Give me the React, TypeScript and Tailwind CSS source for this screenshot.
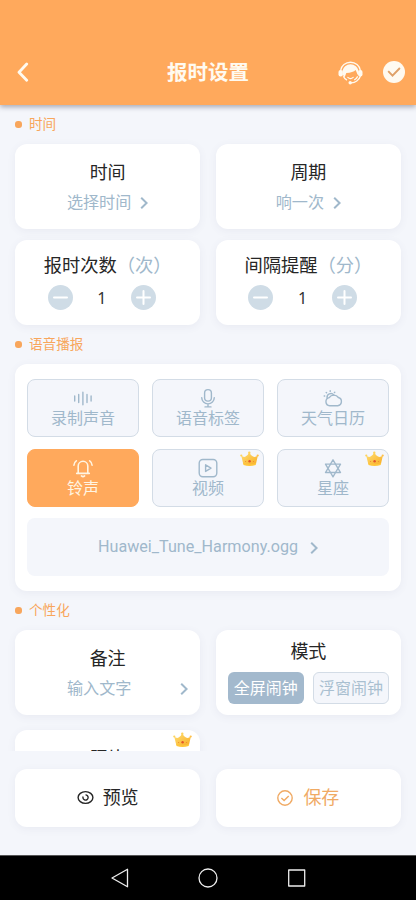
import type { ReactNode } from "react";

function Chevron({ className = "" }: { className?: string }) {
  return (
    <svg className={`shrink-0 ${className}`} width="8" height="12" viewBox="0 0 8 12" fill="none" stroke="#a0b8cb" strokeWidth="2">
      <path d="M1.2 0.7 6.6 6 1.2 11.3" />
    </svg>
  );
}

function Crown({ className = "" }: { className?: string }) {
  return (
    <svg className={`absolute ${className}`} width="19" height="16" viewBox="0 0 19 16">
      <defs>
        <linearGradient id="crown" x1="0" y1="0" x2="1" y2="1">
          <stop offset="0" stopColor="#ffdf73" />
          <stop offset="1" stopColor="#f8ac24" />
        </linearGradient>
      </defs>
      <path d="M1.2 4.6Q3.6 6.6 5.6 5.6 7.8 4.4 9.3 1.6 10.6 4.4 13 5.6 15.2 6.6 17.9 4.6L16 12.7Q9.5 15.6 3.2 12.7Z" fill="url(#crown)" />
      <path d="M3.1 12Q9.5 14.6 16.1 12L15.7 14Q9.5 16.2 3.5 14Z" fill="#ffc63a" />
      <circle cx="9.3" cy="1.7" r="1.2" fill="#ffd35b" />
      <circle cx="1.3" cy="4.5" r="1.1" fill="#ffd35b" />
      <circle cx="17.7" cy="4.5" r="1.1" fill="#ffc04a" />
      <circle cx="9.6" cy="10.2" r="1.2" fill="#e4572a" />
      <circle cx="5.6" cy="10.5" r=".6" fill="#ee8a2c" />
      <circle cx="13.5" cy="10.5" r=".6" fill="#ee8a2c" />
    </svg>
  );
}

function Label({ children, className = "" }: { children: ReactNode; className?: string }) {
  return (
    <div className={`flex h-5 items-center gap-[7px] text-[13.6px] leading-5 text-[#f8a65c] ${className}`}>
      <span className="h-[7px] w-[7px] rounded-[3px] bg-[#f8a65c]" />
      <span>{children}</span>
    </div>
  );
}

function Card({ children, className = "" }: { children?: ReactNode; className?: string }) {
  return (
    <div className={`relative rounded-xl bg-white shadow-[0_2px_8px_rgba(80,90,130,0.07)] ${className}`}>{children}</div>
  );
}

function PickCard({ title, value }: { title: string; value: string }) {
  return (
    <Card className="h-[85px] pt-[17px] text-center">
      <div className="text-[18px] leading-6 text-[#262626]">{title}</div>
      <div className="mt-[5px] flex items-center justify-center gap-[9px] text-[16.1px] leading-6 text-[#a0b8cb]">
        <span className="pt-px">{value}</span>
        <Chevron />
      </div>
    </Card>
  );
}

function RoundButton({ plus = false }: { plus?: boolean }) {
  return (
    <button className="flex h-[25px] w-[25px] items-center justify-center rounded-full bg-[#cfdce6]">
      <svg width="15" height="15" viewBox="0 0 15 15" stroke="#fff" strokeWidth="2" strokeLinecap="round">
        <path d="M1 7.5h13" />
        {plus && <path d="M7.5 1v13" />}
      </svg>
    </button>
  );
}

function StepCard({ title, unit }: { title: string; unit: string }) {
  return (
    <Card className="h-[85px] pt-[14px]">
      <div className="text-center text-[18.3px] leading-6 whitespace-nowrap text-[#262626]">
        {title}
        <span className="text-[#a0b8cb]">（{unit}）</span>
      </div>
      <div className="mt-[7px] flex items-center pl-[32.5px]">
        <RoundButton />
        <span className="w-[58.5px] text-center font-[Noto_Sans] text-[16px] leading-6 text-[#333]">1</span>
        <RoundButton plus />
      </div>
    </Card>
  );
}

const line = { fill: "none", stroke: "currentColor", strokeWidth: 1.4, strokeLinecap: "round", strokeLinejoin: "round" } as const;

const icons = {
  wave: (
    <svg width="20" height="20" viewBox="0 0 20 20" {...line}>
      <path d="M1.7 8v5M5.7 6.5v8M9.9 4.2v12.6M14 6.5v8M18.1 8v5" />
    </svg>
  ),
  mic: (
    <svg width="20" height="20" viewBox="0 0 20 20" {...line}>
      <rect x="6.6" y="1.6" width="6.8" height="11.5" rx="3.4" />
      <path d="M3.7 9.6a6.3 6.3 0 0 0 12.6 0M10 16v2.8M7 18.9h6" />
    </svg>
  ),
  weather: (
    <svg width="20" height="20" viewBox="0 0 20 20" {...line}>
      <path d="M6.7 17.7a4.1 4.1 0 0 1-.5-8.1 5.6 5.6 0 0 1 9.2-.1 4.2 4.2 0 0 1-.7 8.2z" />
      <path d="M4.1 10.1a3.8 3.8 0 0 1 6.8-2.9M7.2 2.8v.6M3.2 4.4l.4.4M1.2 8h.5M11.8 4.2l-.4.4" />
    </svg>
  ),
  bell: (
    <svg width="20" height="20" viewBox="0 0 20 20" {...line} strokeWidth={1.6}>
      <path d="M3.7 15.4h12.6M5.2 15.2V8.1a4.8 4.8 0 0 1 9.6 0v7.1M8.4 17.9q1.6 1.3 3.2 0M3.3 2.8Q1.1 4.3.9 7.2M16.7 2.8q2.2 1.5 2.4 4.4" />
    </svg>
  ),
  video: (
    <svg width="20" height="20" viewBox="0 0 20 20" {...line}>
      <rect x="1.2" y="1.5" width="17.6" height="17.2" rx="3.6" />
      <path d="m7.6 6.8 5.4 3.3-5.4 3.3z" />
    </svg>
  ),
  star: (
    <svg width="20" height="20" viewBox="0 0 20 20" {...line}>
      <path d="M10 1.8 12.5 6.1 17.5 6.1 15 10.3 17.5 14.5 12.5 14.5 10 18.8 7.5 14.5 2.5 14.5 5 10.3 2.5 6.1 7.5 6.1Z" />
      <path d="M7.5 6.1h5l2.5 4.2-2.5 4.2h-5L5 10.3Z" />
    </svg>
  ),
};

function Tile({ icon, name, active = false, vip = false }: { icon: ReactNode; name: string; active?: boolean; vip?: boolean }) {
  return (
    <button
      className={`relative flex h-[58px] flex-col items-center rounded-lg border pt-[8px] ${
        active ? "border-[#ffa95c] bg-[#ffa95c] text-[#fff5e2]" : "border-[#d3dce6] bg-[#f4f6fb] text-[#a0b8cb]"
      }`}
    >
      {icon}
      <span className="-mt-px text-[16px] leading-[24px]">{name}</span>
      {vip && <Crown className="top-[1px] right-[4px]" />}
    </button>
  );
}

export default function App() {
  return (
    <div className="flex h-[900px] w-[416px] flex-col overflow-hidden bg-[#f4f6fb] font-['Roboto','Noto_Sans_CJK_SC',sans-serif]">
      <header className="relative z-10 flex h-[105px] shrink-0 items-center bg-[#ffa95c] px-[11px] pt-[39px] text-[#fffaf0] shadow-[0_2px_5px_rgba(70,70,90,0.45)]">
        <div className="flex flex-1 items-center">
          <svg className="ml-[5px]" width="14" height="20" viewBox="0 0 14 20" fill="none" stroke="#fffaf0" strokeWidth="2.8" strokeLinecap="round" strokeLinejoin="round">
            <path d="M10.7 2 3 10.3l7.7 8" />
          </svg>
        </div>
        <h1 className="pt-[2px] text-[20.5px] leading-7 font-bold">报时设置</h1>
        <div className="flex flex-1 items-center justify-end gap-[20px]">
          <svg width="25" height="25" viewBox="0 0 25 25" fill="none">
            <path d="M2.6 10.5a10 9.6 0 0 1 19.8 0" stroke="#fffaf0" strokeWidth="1.3" />
            <path d="M4.4 11a8.2 7.9 0 0 1 16.2 0v4.6q-1.5-1.2-2-3.4l-1-2.3q-2.6 2.6-9.3 3l-1.6 4.4Q4.3 15 4.4 11Z" fill="#fffaf0" />
            <rect x=".5" y="10" width="4.4" height="6.6" rx="2" fill="#fffaf0" />
            <rect x="20.1" y="10" width="4.4" height="6.6" rx="2" fill="#fffaf0" />
            <path d="M22.4 16a9.5 9.5 0 0 1-9.6 6.8M5.3 16.3q1.2 2.6 3.7 3.8M16.2 20q2.3-1.2 3.5-3.6" stroke="#fffaf0" strokeWidth="1.3" />
            <path d="M9.8 17.4q2.7 2.3 5.4 0" stroke="#fffaf0" strokeWidth="1.2" strokeLinecap="round" />
            <circle cx="12.2" cy="22.8" r="1.7" fill="#fffaf0" />
          </svg>
          <svg width="22" height="22" viewBox="0 0 22 22" fill="none">
            <circle cx="11" cy="11" r="11" fill="#fffaf0" />
            <path d="m5.2 10.2 4.3 4.4 7.4-7.6" stroke="#dfa067" strokeWidth="1.9" />
          </svg>
        </div>
      </header>

      <main className="h-[646px] shrink-0 overflow-hidden px-[15px] pt-[9px]">
        <Label>时间</Label>
        <div className="mt-[10px] grid grid-cols-2 gap-x-[15.5px] gap-y-[11px]">
          <PickCard title="时间" value="选择时间" />
          <PickCard title="周期" value="响一次" />
          <StepCard title="报时次数" unit="次" />
          <StepCard title="间隔提醒" unit="分" />
        </div>

        <Label className="mt-[9px]">语音播报</Label>
        <Card className="mt-[10px] h-[227px] px-3 pt-[15px]">
          <div className="grid grid-cols-3 gap-x-[13px] gap-y-[12px]">
            <Tile icon={icons.wave} name="录制声音" />
            <Tile icon={icons.mic} name="语音标签" />
            <Tile icon={icons.weather} name="天气日历" />
            <Tile icon={icons.bell} name="铃声" active />
            <Tile icon={icons.video} name="视频" vip />
            <Tile icon={icons.star} name="星座" vip />
          </div>
          <div className="mt-[11px] flex h-[58px] items-center justify-center gap-[12px] rounded-lg bg-[#f4f6fb] pt-px text-[16.15px] text-[#a0b8cb]">
            <span>Huawei_Tune_Harmony.ogg</span>
            <Chevron />
          </div>
        </Card>

        <Label className="mt-[9px]">个性化</Label>
        <div className="mt-[10px] grid grid-cols-2 gap-x-[15.5px] gap-y-[15px]">
          <Card className="h-[85px] pt-[17px]">
            <div className="text-center text-[18px] leading-6 text-[#262626]">备注</div>
            <div className="mt-[5px] flex items-center justify-between pr-3 pl-[52px] text-[16.1px] leading-6 text-[#a0b8cb]">
              <span className="pt-px">输入文字</span>
              <Chevron />
            </div>
          </Card>
          <Card className="h-[85px] px-3 pt-[10px]">
            <div className="text-center text-[18px] leading-6 text-[#262626]">模式</div>
            <div className="mt-2 grid grid-cols-2 gap-[9px] text-[16px] whitespace-nowrap">
              <button className="flex h-8 items-center justify-center rounded-md bg-[#a3b9cd] pt-px text-white">全屏闹钟</button>
              <button className="flex h-8 items-center justify-center rounded-md border border-[#d3dce6] bg-[#f4f6fb] pt-px text-[#a9bfd0]">浮窗闹钟</button>
            </div>
          </Card>
          <Card className="h-[85px] pt-[17px]">
            <div className="text-center text-[18px] leading-6 text-[#262626]">照片</div>
            <Crown className="top-[2px] right-[8px]" />
          </Card>
        </div>
      </main>

      <footer className="grid h-[104px] shrink-0 grid-cols-2 gap-x-[15.5px] px-[15px] pt-[17.5px]">
        <Card className="flex h-[58px] items-center justify-center gap-[9px] text-[18px] text-[#262626]">
          <svg width="17" height="15" viewBox="0 0 17 15" fill="none" stroke="currentColor" strokeWidth="1.4">
            <ellipse cx="8.5" cy="7.5" rx="7.4" ry="5.9" />
            <path d="M8.5 4.9a2.6 2.6 0 1 1-2.4 1.7" />
          </svg>
          <span>预览</span>
        </Card>
        <Card className="flex h-[58px] items-center justify-center gap-[10px] text-[18px] text-[#f0aa64]">
          <svg width="16" height="16" viewBox="0 0 16 16" fill="none" stroke="currentColor" strokeWidth="1.4">
            <circle cx="8" cy="8" r="7.2" />
            <path d="m4.4 8 2.7 2.6 4.6-4.7" />
          </svg>
          <span>保存</span>
        </Card>
      </footer>

      <nav className="flex h-[45px] shrink-0 items-center justify-center gap-[68.5px] border-t border-[#555] bg-black">
        <svg width="20" height="20" viewBox="0 0 20 20" fill="none" stroke="#eee" strokeWidth="1.3" strokeLinejoin="round">
          <path d="M17.5 1.2v17.6L2 10Z" />
        </svg>
        <svg width="20" height="20" viewBox="0 0 20 20" fill="none" stroke="#eee" strokeWidth="1.3">
          <circle cx="10" cy="10" r="9" />
        </svg>
        <svg width="20" height="20" viewBox="0 0 20 20" fill="none" stroke="#eee" strokeWidth="1.3" strokeLinejoin="round">
          <rect x="1.7" y="2" width="16" height="16" />
        </svg>
      </nav>
    </div>
  );
}
